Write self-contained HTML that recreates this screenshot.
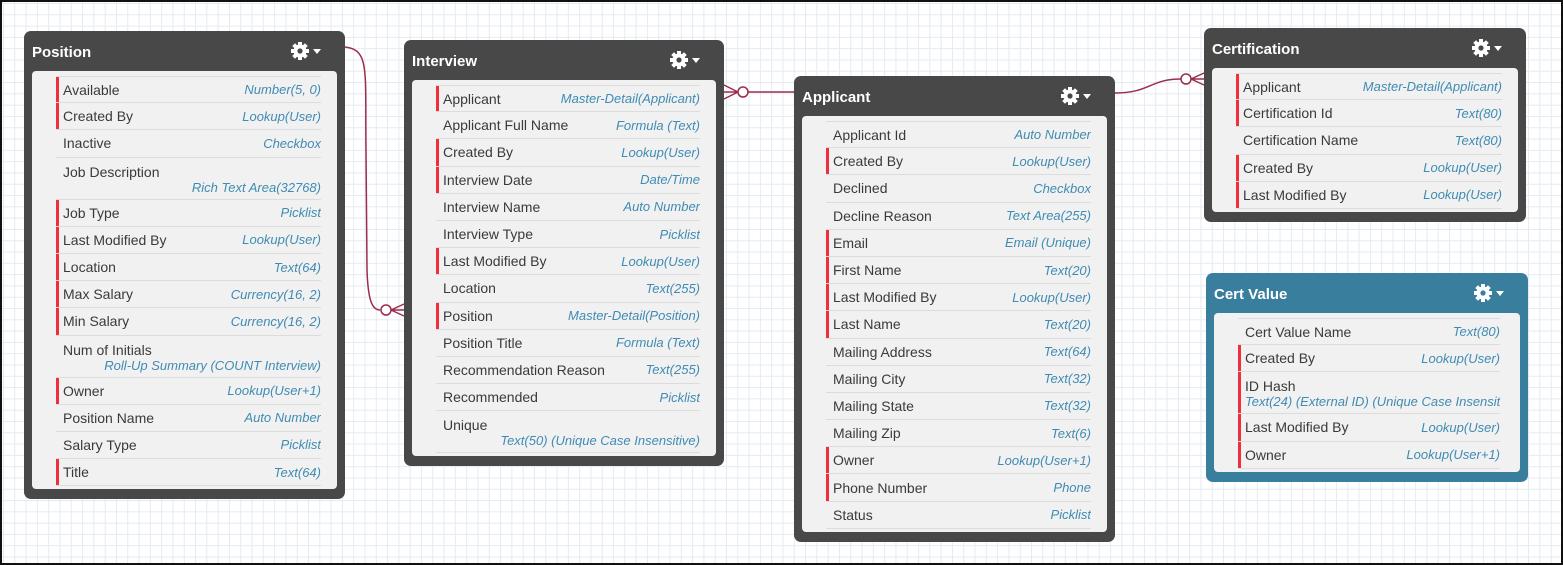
<!DOCTYPE html>
<html><head><meta charset="utf-8"><style>
*{box-sizing:border-box;margin:0;padding:0}
html,body{width:1563px;height:565px;overflow:hidden}
body{position:relative;font-family:"Liberation Sans",Arial,sans-serif;background-color:#fff;
background-image:linear-gradient(#e4ebf3 1px,transparent 1px),linear-gradient(90deg,#e4ebf3 1px,transparent 1px);
background-size:11.3px 11.3px;background-position:3px 3px}
.frame{position:absolute;left:0;top:0;width:1563px;height:565px;border:2px solid #111;pointer-events:none;z-index:10}
.card{position:absolute;background:#484848;border-radius:7px;padding:0 8px 10px}
.card.blue{background:#3a7e9d}
.hd{height:40px;color:#fff;font-weight:bold;font-size:15px;line-height:18px;padding-top:13px;position:relative}
.gear{position:absolute;right:12px;top:9px}
.bd{background:#f1f1f1;border-radius:4px;padding:5px 16px 3px 24px}
.r{height:27.2px;border-bottom:1px solid #dcdcdc;position:relative;display:flex;justify-content:space-between;align-items:center;padding-left:7px;font-size:14px;color:#3a3a3a;white-space:nowrap;overflow:hidden}
.r:first-child{border-top:1px solid #dcdcdc}
.r i{color:#3f8bb3;font-size:13px}
.r.q::before{content:"";position:absolute;left:0;top:0;bottom:0;width:3px;background:#ef2f3b}
.r.t{height:42px;display:block;padding-top:6px}
.r.t i{display:block;text-align:right;margin-top:0px}
.r.t i.l{text-align:left}
svg.ln{position:absolute;left:0;top:0}
</style></head><body>
<svg class="ln" width="1563" height="565">
<g fill="none" stroke="#9b2c4d" stroke-width="1.5">
<path d="M345 47 C370 50,365 70,366 150 L367 270 C368 300,372 310,380 310"/>
<circle cx="386" cy="310" r="5" fill="#fff"/>
<path d="M391 310 L404 304 M391 310 L404 310 M391 310 L404 316"/>
<path d="M748 92 L794 92"/>
<circle cx="743" cy="92" r="5" fill="#fff"/>
<path d="M738 92 L724 85 M738 92 L724 92 M738 92 L724 99"/>
<path d="M1115 93 C1150 93,1150 79,1181 79"/>
<circle cx="1186" cy="79" r="5" fill="#fff"/>
<path d="M1191 79 L1204 73 M1191 79 L1204 79 M1191 79 L1204 85"/>
</g></svg>

<div class="card" style="left:24px;top:31px;width:321px">
<div class="hd">Position<span class="gear"><svg width="36" height="22"><g fill="#fff" transform="translate(11,11)"><circle r="6.5"/><g id="t"><rect x="-2" y="-9" width="4" height="18"/><rect x="-9" y="-2" width="18" height="4"/><rect x="-2" y="-9" width="4" height="18" transform="rotate(45)"/><rect x="-2" y="-9" width="4" height="18" transform="rotate(-45)"/></g><circle r="2.6" fill="#484848"/></g><path d="M24 9 L32 9 L28 14Z" fill="#fff"/></svg></span></div>
<div class="bd">
<div class="r q">Available<i>Number(5, 0)</i></div>
<div class="r q">Created By<i>Lookup(User)</i></div>
<div class="r">Inactive<i>Checkbox</i></div>
<div class="r t">Job Description<i>Rich Text Area(32768)</i></div>
<div class="r q">Job Type<i>Picklist</i></div>
<div class="r q">Last Modified By<i>Lookup(User)</i></div>
<div class="r q">Location<i>Text(64)</i></div>
<div class="r q">Max Salary<i>Currency(16, 2)</i></div>
<div class="r q">Min Salary<i>Currency(16, 2)</i></div>
<div class="r t">Num of Initials<i>Roll-Up Summary (COUNT Interview)</i></div>
<div class="r q">Owner<i>Lookup(User+1)</i></div>
<div class="r">Position Name<i>Auto Number</i></div>
<div class="r">Salary Type<i>Picklist</i></div>
<div class="r q">Title<i>Text(64)</i></div>
</div></div>

<div class="card" style="left:404px;top:40px;width:320px">
<div class="hd">Interview<span class="gear"><svg width="36" height="22"><g fill="#fff" transform="translate(11,11)"><circle r="6.5"/><use href="#t"/><circle r="2.6" fill="#484848"/></g><path d="M24 9 L32 9 L28 14Z" fill="#fff"/></svg></span></div>
<div class="bd">
<div class="r q">Applicant<i>Master-Detail(Applicant)</i></div>
<div class="r">Applicant Full Name<i>Formula (Text)</i></div>
<div class="r q">Created By<i>Lookup(User)</i></div>
<div class="r q">Interview Date<i>Date/Time</i></div>
<div class="r">Interview Name<i>Auto Number</i></div>
<div class="r">Interview Type<i>Picklist</i></div>
<div class="r q">Last Modified By<i>Lookup(User)</i></div>
<div class="r">Location<i>Text(255)</i></div>
<div class="r q">Position<i>Master-Detail(Position)</i></div>
<div class="r">Position Title<i>Formula (Text)</i></div>
<div class="r">Recommendation Reason<i>Text(255)</i></div>
<div class="r">Recommended<i>Picklist</i></div>
<div class="r t">Unique<i>Text(50) (Unique Case Insensitive)</i></div>
</div></div>

<div class="card" style="left:794px;top:76px;width:321px">
<div class="hd">Applicant<span class="gear"><svg width="36" height="22"><g fill="#fff" transform="translate(11,11)"><circle r="6.5"/><use href="#t"/><circle r="2.6" fill="#484848"/></g><path d="M24 9 L32 9 L28 14Z" fill="#fff"/></svg></span></div>
<div class="bd">
<div class="r">Applicant Id<i>Auto Number</i></div>
<div class="r q">Created By<i>Lookup(User)</i></div>
<div class="r">Declined<i>Checkbox</i></div>
<div class="r">Decline Reason<i>Text Area(255)</i></div>
<div class="r q">Email<i>Email (Unique)</i></div>
<div class="r q">First Name<i>Text(20)</i></div>
<div class="r q">Last Modified By<i>Lookup(User)</i></div>
<div class="r q">Last Name<i>Text(20)</i></div>
<div class="r">Mailing Address<i>Text(64)</i></div>
<div class="r">Mailing City<i>Text(32)</i></div>
<div class="r">Mailing State<i>Text(32)</i></div>
<div class="r">Mailing Zip<i>Text(6)</i></div>
<div class="r q">Owner<i>Lookup(User+1)</i></div>
<div class="r q">Phone Number<i>Phone</i></div>
<div class="r">Status<i>Picklist</i></div>
</div></div>

<div class="card" style="left:1204px;top:28px;width:322px">
<div class="hd">Certification<span class="gear"><svg width="36" height="22"><g fill="#fff" transform="translate(11,11)"><circle r="6.5"/><use href="#t"/><circle r="2.6" fill="#484848"/></g><path d="M24 9 L32 9 L28 14Z" fill="#fff"/></svg></span></div>
<div class="bd">
<div class="r q">Applicant<i>Master-Detail(Applicant)</i></div>
<div class="r q">Certification Id<i>Text(80)</i></div>
<div class="r">Certification Name<i>Text(80)</i></div>
<div class="r q">Created By<i>Lookup(User)</i></div>
<div class="r q">Last Modified By<i>Lookup(User)</i></div>
</div></div>

<div class="card blue" style="left:1206px;top:273px;width:322px">
<div class="hd">Cert Value<span class="gear"><svg width="36" height="22"><g fill="#fff" transform="translate(11,11)"><circle r="6.5"/><use href="#t"/><circle r="2.6" fill="#3a7e9d"/></g><path d="M24 9 L32 9 L28 14Z" fill="#fff"/></svg></span></div>
<div class="bd" style="padding-right:20px">
<div class="r">Cert Value Name<i>Text(80)</i></div>
<div class="r q">Created By<i>Lookup(User)</i></div>
<div class="r t q">ID Hash<i class="l">Text(24) (External ID) (Unique Case Insensitive)</i></div>
<div class="r q">Last Modified By<i>Lookup(User)</i></div>
<div class="r q">Owner<i>Lookup(User+1)</i></div>
</div></div>

<div class="frame"></div>
</body></html>
